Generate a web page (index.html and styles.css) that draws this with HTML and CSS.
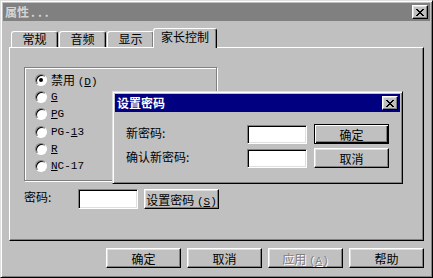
FILE: index.html
```html
<!DOCTYPE html>
<html lang="zh-CN">
<head>
    <meta charset="UTF-8">
    <title>属性</title>
    <link rel="stylesheet" href="styles.css">
</head>
<body>
    <div class="window">
        <div class="titlebar inactive">
            <span class="title">属性<span class="dots">...</span></span>
            <span class="close-btn">
                <svg width="8" height="7" viewBox="0 0 8 7"><path d="M0 0h2v1H0zM6 0h2v1H6zM1 1h2v1H1zM5 1h2v1H5zM2 2h4v1H2zM3 3h2v1H3zM2 4h4v1H2zM1 5h2v1H1zM5 5h2v1H5zM0 6h2v1H0zM6 6h2v1H6z"/></svg>
            </span>
        </div>

        <div class="tabs">
            <div class="tab">常规</div>
            <div class="tab">音频</div>
            <div class="tab">显示</div>
            <div class="tab selected">家长控制</div>
        </div>

        <div class="panel">
            <div class="groupbox">
                <div class="radio"><span class="radio-dot checked"></span><span>禁用 <span class="mono">(<u>D</u>)</span></span></div>
                <div class="radio"><span class="radio-dot"></span><span class="mono"><u>G</u></span></div>
                <div class="radio"><span class="radio-dot"></span><span class="mono"><u>P</u>G</span></div>
                <div class="radio"><span class="radio-dot"></span><span class="mono">PG-<u>1</u>3</span></div>
                <div class="radio"><span class="radio-dot"></span><span class="mono"><u>R</u></span></div>
                <div class="radio"><span class="radio-dot"></span><span class="mono"><u>N</u>C-17</span></div>
            </div>

            <div class="pwd-row">
                <span class="pwd-label">密码:</span>
                <span class="field"></span>
                <span class="btn"><span>设置密码 <span class="mono">(<u>S</u>)</span></span></span>
            </div>
        </div>

        <div class="actions">
            <span class="btn">确定</span>
            <span class="btn">取消</span>
            <span class="btn disabled"><span>应用 <span class="mono">(<u>A</u>)</span></span></span>
            <span class="btn">帮助</span>
        </div>

        <!-- child dialog over the property sheet -->
        <div class="dialog">
            <div class="titlebar">
                <span class="title">设置密码</span>
                <span class="close-btn">
                    <svg width="8" height="7" viewBox="0 0 8 7"><path d="M0 0h2v1H0zM6 0h2v1H6zM1 1h2v1H1zM5 1h2v1H5zM2 2h4v1H2zM3 3h2v1H3zM2 4h4v1H2zM1 5h2v1H1zM5 5h2v1H5zM0 6h2v1H0zM6 6h2v1H6z"/></svg>
                </span>
            </div>
            <div class="dialog-body">
                <span class="dlg-label">新密码:</span>
                <span class="field small"></span>
                <span class="btn default">确定</span>

                <span class="dlg-label">确认新密码:</span>
                <span class="field small"></span>
                <span class="btn">取消</span>
            </div>
        </div>
    </div>
</body>
</html>
```

FILE: styles.css
```css
* {
    box-sizing: border-box;
}

body {
    margin: 0;
    font-family: "Noto Sans CJK SC", "Liberation Sans", sans-serif;
    font-size: 12px;
    color: #000;
    background: #c0c0c0;
}

u {
    text-underline-offset: 1px;
}

.mono {
    font-family: "Liberation Mono", "DejaVu Sans Mono", monospace;
    font-size: 11px;
}

/* window frame */
.window {
    position: relative;
    display: flex;
    flex-direction: column;
    width: 433px;
    height: 278px;
    padding: 2px;
    background: #c0c0c0;
    border: 1px solid;
    border-color: #dfdfdf #000 #000 #dfdfdf;
    box-shadow: inset 1px 1px #fff, inset -1px -1px #808080;
}

.titlebar {
    display: flex;
    align-items: center;
    justify-content: space-between;
    height: 18px;
    padding: 0 2px;
    background: #000080;
}

.titlebar .title {
    color: #fff;
    font-weight: bold;
    line-height: 18px;
}

.titlebar.inactive {
    background: #808080;
}

.titlebar.inactive .title {
    color: #d4d4d4;
}

.dots {
    letter-spacing: 3px;
    margin-left: 2px;
}

.close-btn {
    display: flex;
    align-items: center;
    justify-content: center;
    width: 16px;
    height: 14px;
    background: #c0c0c0;
    border: 1px solid;
    border-color: #fff #000 #000 #fff;
    box-shadow: inset -1px -1px #808080, inset 1px 1px #dfdfdf;
}

.close-btn svg {
    display: block;
    fill: #000;
}

/* tabs */
.tabs {
    display: flex;
    align-items: flex-end;
    height: 19px;
    margin-top: 7px;
    padding-left: 8px;
}

.tab {
    width: 47px;
    height: 16px;
    margin-right: 1px;
    text-align: center;
    line-height: 14px;
    border: 1px solid;
    border-bottom: none;
    border-color: #fff #000 transparent #fff;
    border-radius: 3px 3px 0 0;
    box-shadow: inset -1px 0 #808080;
}

.tab.selected {
    position: relative;
    z-index: 1;
    width: 64px;
    height: 20px;
    margin-left: -2px;
    margin-bottom: -1px;
    line-height: 16px;
    background: #c0c0c0;
}

.panel {
    height: 194px;
    margin: 0 6px;
    padding: 19px 0 0 14px;
    border: 1px solid;
    border-color: #fff #000 #000 #fff;
    box-shadow: inset -1px -1px #808080;
}

.groupbox {
    width: 193px;
    height: 114px;
    padding: 3px 0 0 10px;
    border: 1px solid #808080;
    box-shadow: 1px 1px 0 #fff, inset 1px 1px 0 #fff;
}

.radio {
    display: flex;
    align-items: center;
    gap: 4px;
    height: 17.3px;
}

.radio-dot {
    position: relative;
    flex: none;
    width: 12px;
    height: 12px;
    border-radius: 50%;
    background: #fff;
    border: 1px solid;
    border-color: #808080 #fff #fff #808080;
    box-shadow: inset 1px 1px #000;
}

.radio-dot.checked::after {
    content: "";
    position: absolute;
    left: 3px;
    top: 3px;
    width: 4px;
    height: 4px;
    border-radius: 50%;
    background: #000;
}

.pwd-row {
    display: flex;
    align-items: center;
    height: 20px;
    margin-top: 8px;
}

.pwd-label {
    width: 54px;
    margin-top: -6px;
}

.field {
    width: 60px;
    height: 20px;
    margin-right: 6px;
    background: #fff;
    border: 1px solid;
    border-color: #808080 #fff #fff #808080;
    box-shadow: inset 1px 1px #000, inset -1px -1px #dfdfdf;
}

.field.small {
    width: 60px;
    height: 19px;
    margin-right: 0;
}

.btn {
    display: flex;
    align-items: center;
    justify-content: center;
    width: 75px;
    height: 20px;
    background: #c0c0c0;
    border: 1px solid;
    border-color: #fff #000 #000 #fff;
    box-shadow: inset -1px -1px #808080, inset 1px 1px #dfdfdf;
}

.btn.default {
    border-color: #000;
    box-shadow: inset 1px 1px #fff, inset -1px -1px #000, inset -2px -2px #808080;
}

.btn.disabled {
    color: #808080;
    text-shadow: 1px 1px #fff;
}

.actions {
    display: flex;
    justify-content: flex-end;
    gap: 6px;
    margin-top: 7px;
    padding-right: 6px;
}

/* set password dialog */
.dialog {
    position: absolute;
    left: 111px;
    top: 90px;
    z-index: 5;
    width: 291px;
    height: 93px;
    padding: 2px;
    background: #c0c0c0;
    border: 1px solid;
    border-color: #dfdfdf #000 #000 #dfdfdf;
    box-shadow: inset 1px 1px #fff, inset -1px -1px #808080;
}

.dialog-body {
    display: grid;
    grid-template-columns: 114px 60px 75px;
    column-gap: 7px;
    row-gap: 4px;
    align-items: center;
    padding: 12px 0 0 11px;
}

.dlg-label {
    margin-top: -4px;
}
```
